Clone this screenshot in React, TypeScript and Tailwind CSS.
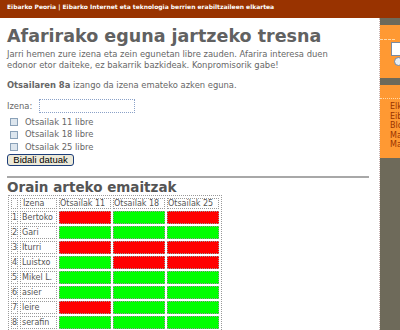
import React from "react";

const rows: [string, boolean[]][] = [
  ["Bertoko", [false, true, false]],
  ["Gari", [true, true, true]],
  ["Iturri", [false, false, false]],
  ["Luistxo", [true, false, false]],
  ["Mikel L.", [true, true, true]],
  ["asier", [true, true, true]],
  ["leire", [false, true, true]],
  ["serafin", [true, true, true]],
];

function Box() {
  return (
    <span className="inline-block w-[8px] h-[8px] border border-[#8aa1b8] bg-[#dde6ee] mr-[7px] shrink-0" />
  );
}

export default function App() {
  const font = { fontFamily: '"DejaVu Sans", Verdana, sans-serif' };
  return (
    <div className="w-[400px] h-[330px] overflow-hidden bg-white flex flex-col" style={font}>
      <div className="h-[18px] bg-[#993300] text-white font-bold text-[6px] leading-[12px] pl-[7px] pt-[1px] whitespace-nowrap shrink-0">
        Eibarko Peoria | Eibarko Internet eta teknologia berrien erabiltzaileen elkartea
      </div>
      <div className="flex flex-1 min-h-0">
        <div className="w-[379px] pl-[7px] text-[#666] text-[8.4px] leading-[11px]">
          <h1 className="text-[17.5px] font-bold leading-[20px] mt-[8px] text-[#616161] whitespace-nowrap">Afarirako eguna jartzeko tresna</h1>
          <p className="mt-[3px] whitespace-nowrap">Jarri hemen zure izena eta zein egunetan libre zauden. Afarira interesa duen<br />edonor etor daiteke, ez bakarrik bazkideak. Konpromisorik gabe!</p>
          <p className="mt-[9px]"><b>Otsailaren 8a</b> izango da izena emateko azken eguna.</p>
          <div className="mt-[8px] flex items-center h-[14px]">
            <span className="w-[32px]">Izena:</span>
            <span className="w-[96px] h-[14px] border border-dotted border-[#8aa1c8] bg-white" />
          </div>
          <div className="mt-[5px] flex flex-col gap-[4.5px]">
            {["11", "18", "25"].map((d) => (
              <div key={d} className="flex items-center h-[8px] pl-[3px]">
                <Box />
                <span>Otsailak {d} libre</span>
              </div>
            ))}
          </div>
          <button
            className="mt-[3px] h-[12px] w-[67px] rounded-[3px] border border-[#1c3d7a] bg-[#ece9d8] text-black text-[9.5px] leading-[10px] flex items-center justify-center"
            style={{ fontFamily: '"Liberation Sans", Arial, sans-serif' }}
          >
            Bidali datuak
          </button>
          <div className="mt-[10px] w-[362px] h-[2px] bg-[#a8a8a8]" />
          <h2 className="text-[13.5px] font-bold leading-[15px] text-[#555] mt-[2px] whitespace-nowrap">Orain arteko emaitzak</h2>
          <table className="ml-[1px] border border-dotted border-[#999] border-separate border-spacing-[2px] text-[8px] leading-[9px] text-[#555] table-fixed" style={{ width: 209 }}>
            <colgroup>
              <col style={{ width: 7 }} />
              <col style={{ width: 37 }} />
              <col style={{ width: 52 }} />
              <col style={{ width: 52 }} />
              <col style={{ width: 52 }} />
            </colgroup>
            <thead>
              <tr className="h-[11px]">
                <th className="border border-dotted border-[#999] p-0 font-normal" />
                <th className="border border-dotted border-[#999] p-0 pl-[2px] font-normal text-left whitespace-nowrap overflow-hidden">Izena</th>
                <th className="border border-dotted border-[#999] p-0 font-normal text-left whitespace-nowrap overflow-hidden">Otsailak 11</th>
                <th className="border border-dotted border-[#999] p-0 font-normal text-left whitespace-nowrap overflow-hidden">Otsailak 18</th>
                <th className="border border-dotted border-[#999] p-0 font-normal text-left whitespace-nowrap overflow-hidden">Otsailak 25</th>
              </tr>
            </thead>
            <tbody>
              {rows.map(([name, vals], i) => (
                <tr key={name} className="h-[13px]">
                  <td className="border border-dotted border-[#999] p-0 text-center">{i + 1}</td>
                  <td className="border border-dotted border-[#999] p-0 pl-[1px] whitespace-nowrap overflow-hidden">{name}</td>
                  {vals.map((v, j) => (
                    <td
                      key={j}
                      className={
                        v
                          ? "border border-dotted border-[#999] p-0 bg-[#00ff00]"
                          : "border border-dotted border-[#999] p-0 bg-[#ff0000]"
                      }
                    />
                  ))}
                </tr>
              ))}
            </tbody>
          </table>
        </div>
        <div className="w-[21px] border-l border-dotted border-[#c8b4b4] overflow-hidden flex flex-col">
          <div className="h-[7px] bg-[#6e6a5a] shrink-0" />
          <div className="h-[53px] bg-[#ff9933] shrink-0">
            <div className="mt-[14px] w-[15px] border-t border-dashed border-[#ffd9a8]" />
            <div className="ml-[11px] mt-[2px] w-[40px] h-[14px] bg-white border border-[#7a8aa0]" />
            <div className="ml-[14px] mt-[1px] w-[9px] h-[9px] rounded-full bg-[#e8eef4] border border-[#6d86a6]" />
          </div>
          <div className="h-[7px] bg-[#6e6a5a] shrink-0" />
          <div className="h-[73px] bg-[#ff9933] shrink-0 text-[#993300] text-[8px] leading-[9.5px] whitespace-nowrap">
            <div className="mt-[13px] border-t border-dotted border-[#ffd9a8]" />
            <div className="pl-[10px] pt-[3px]">
              <div>Elkartea</div>
              <div>Eibar</div>
              <div>Blogak</div>
              <div>Mapa</div>
              <div>Mapa</div>
            </div>
          </div>
          <div className="flex-1 bg-[#6e6a5a]" />
        </div>
      </div>
    </div>
  );
}
